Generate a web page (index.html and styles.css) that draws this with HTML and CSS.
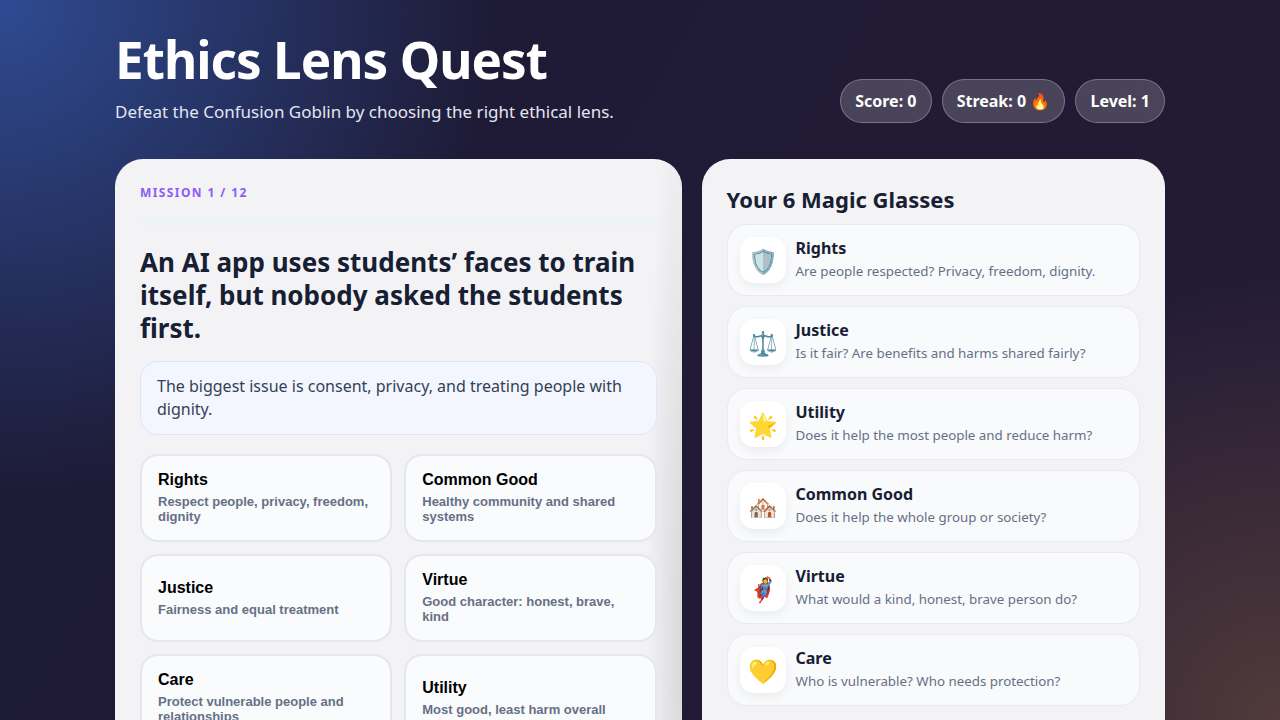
FILE: index.html
```html
<!DOCTYPE html>
<html lang="en">
<head>
    <meta charset="UTF-8" />
    <meta name="viewport" content="width=device-width, initial-scale=1" />
    <title>Ethics Lens Quest</title>
    <link rel="stylesheet" href="styles.css">
</head>
<body>

<div class="app">
    <header class="top">
        <div class="title-block">
            <h1>Ethics Lens Quest</h1>
            <p>Defeat the Confusion Goblin by choosing the right ethical lens.</p>
        </div>
        <div class="stats">
            <div class="pill">Score: 0</div>
            <div class="pill">Streak: 0 🔥</div>
            <div class="pill">Level: 1</div>
        </div>
    </header>

    <main class="layout">
        <section class="card mission">
            <div class="mission-label">MISSION 1 / 12</div>
            <div class="progress"><div class="progress-fill"></div></div>
            <h2>An AI app uses students’ faces to train itself, but nobody asked the students first.</h2>
            <div class="hint">The biggest issue is consent, privacy, and treating people with dignity.</div>
            <div class="choices">
                <button class="choice"><b>Rights</b><span>Respect people, privacy, freedom, dignity</span></button>
                <button class="choice"><b>Common Good</b><span>Healthy community and shared systems</span></button>
                <button class="choice"><b>Justice</b><span>Fairness and equal treatment</span></button>
                <button class="choice"><b>Virtue</b><span>Good character: honest, brave, kind</span></button>
                <button class="choice"><b>Care</b><span>Protect vulnerable people and relationships</span></button>
                <button class="choice"><b>Utility</b><span>Most good, least harm overall</span></button>
            </div>
        </section>

        <aside class="card glasses">
            <h3>Your 6 Magic Glasses</h3>
            <div class="lens-list">
                <div class="lens">
                    <div class="lens-icon">🛡️</div>
                    <div class="lens-text"><strong>Rights</strong><small>Are people respected? Privacy, freedom, dignity.</small></div>
                </div>
                <div class="lens">
                    <div class="lens-icon">⚖️</div>
                    <div class="lens-text"><strong>Justice</strong><small>Is it fair? Are benefits and harms shared fairly?</small></div>
                </div>
                <div class="lens">
                    <div class="lens-icon">🌟</div>
                    <div class="lens-text"><strong>Utility</strong><small>Does it help the most people and reduce harm?</small></div>
                </div>
                <div class="lens">
                    <div class="lens-icon">🏘️</div>
                    <div class="lens-text"><strong>Common Good</strong><small>Does it help the whole group or society?</small></div>
                </div>
                <div class="lens">
                    <div class="lens-icon">🦸</div>
                    <div class="lens-text"><strong>Virtue</strong><small>What would a kind, honest, brave person do?</small></div>
                </div>
                <div class="lens">
                    <div class="lens-icon">💛</div>
                    <div class="lens-text"><strong>Care</strong><small>Who is vulnerable? Who needs protection?</small></div>
                </div>
            </div>
        </aside>
    </main>
</div>

</body>
</html>
```

FILE: styles.css
```css
* { box-sizing: border-box; }
html, body { height: 100%; }
body {
  margin: 0;
  font-family: "Noto Sans", sans-serif;
  color: #172033;
  overflow: hidden;
  background:
    radial-gradient(circle at 0% 0%, #2f4b92 0, rgba(47,75,146,0) 34%),
    radial-gradient(circle at 100% 100%, #503a3a 0, rgba(80,58,58,0) 30%),
    linear-gradient(120deg, #1b1a35, #251b36);
}

.app {
  width: 1050px;
  margin: 0 auto;
  padding-top: 28px;
}

.top {
  display: flex;
  justify-content: space-between;
  align-items: flex-end;
  margin-bottom: 35px;
}
.title-block h1 {
  margin: 0;
  font-size: 51.2px;
  line-height: 62px;
  font-weight: 700;
  color: #fff;
  letter-spacing: -0.97px;
}
.title-block p {
  margin: 10px 0 0;
  font-size: 17px;
  line-height: 24px;
  color: #e2e5f2;
}

.stats { display: flex; gap: 10px; margin-bottom: 1px; }
.pill {
  padding: 9px 14.1px;
  border-radius: 22px;
  background: rgba(255,255,255,0.18);
  border: 1px solid rgba(255,255,255,0.26);
  color: #fff;
  font-size: 16px;
  font-weight: 700;
  line-height: 24px;
}

.layout {
  display: grid;
  grid-template-columns: 566.5fr 463.5fr;
  gap: 20px;
}
.card {
  background: #f3f3f5;
  border-radius: 28px;
  padding: 25px;
}

.mission {
  padding-bottom: 40px;
  background:
    radial-gradient(ellipse 36px 600px at 100% 480px, rgba(0,0,0,0.11), rgba(0,0,0,0)),
    #f3f3f5;
}
.mission-label {
  font-size: 12px;
  line-height: 18px;
  font-weight: 700;
  letter-spacing: 1.4px;
  color: #8b5cf6;
}
.progress {
  height: 12px;
  margin-top: 14px;
  border-radius: 6px;
  background: #eff3f6;
  overflow: hidden;
}
.progress-fill { width: 0; height: 100%; }
.mission h2 {
  margin: 18px 0 0;
  font-size: 26px;
  line-height: 33px;
  font-weight: 700;
  color: #172033;
}
.hint {
  margin-top: 16px;
  padding: 13px 16px;
  border: 1px solid #dfe6fb;
  border-radius: 18px;
  background: #f3f6ff;
  font-size: 16px;
  line-height: 23px;
  color: #334155;
}

.choices {
  display: grid;
  grid-template-columns: 1fr 1fr;
  gap: 12px;
  margin-top: 19px;
}
.choice {
  display: flex;
  flex-direction: column;
  justify-content: center;
  height: 88px;
  padding: 0 16px 0.6px;
  border: 2px solid #e5e7ef;
  border-radius: 18px;
  background: #fafbfd;
  font-family: "Liberation Sans", Arial, sans-serif;
  text-align: left;
}
.choice b {
  font-size: 16px;
  line-height: 18px;
  color: #000;
}
.choice span {
  margin-top: 5px;
  font-size: 13px;
  line-height: 15px;
  font-weight: 700;
  color: #667085;
}

.glasses h3 {
  margin: 1px 0 10px;
  font-size: 22px;
  line-height: 29px;
  font-weight: 700;
  color: #172033;
}
.lens-list { display: flex; flex-direction: column; gap: 10px; }
.lens {
  display: flex;
  align-items: center;
  gap: 10px;
  height: 72px;
  padding: 0 12px;
  border: 1px solid #e8eaef;
  border-radius: 20px;
  background: #f9fafc;
}
.lens-icon {
  display: flex;
  align-items: center;
  justify-content: center;
  flex: none;
  width: 46px;
  height: 46px;
  border-radius: 14px;
  background: #fff;
  box-shadow: 0 4px 10px rgba(0,0,0,0.06);
  font-size: 24px;
}
.lens-text { padding-bottom: 2px; }
.lens-text strong {
  display: block;
  font-size: 16px;
  line-height: 22px;
  color: #172033;
}
.lens-text small {
  display: block;
  margin-top: 2px;
  font-size: 13.33px;
  line-height: 20px;
  color: #667085;
}
```
